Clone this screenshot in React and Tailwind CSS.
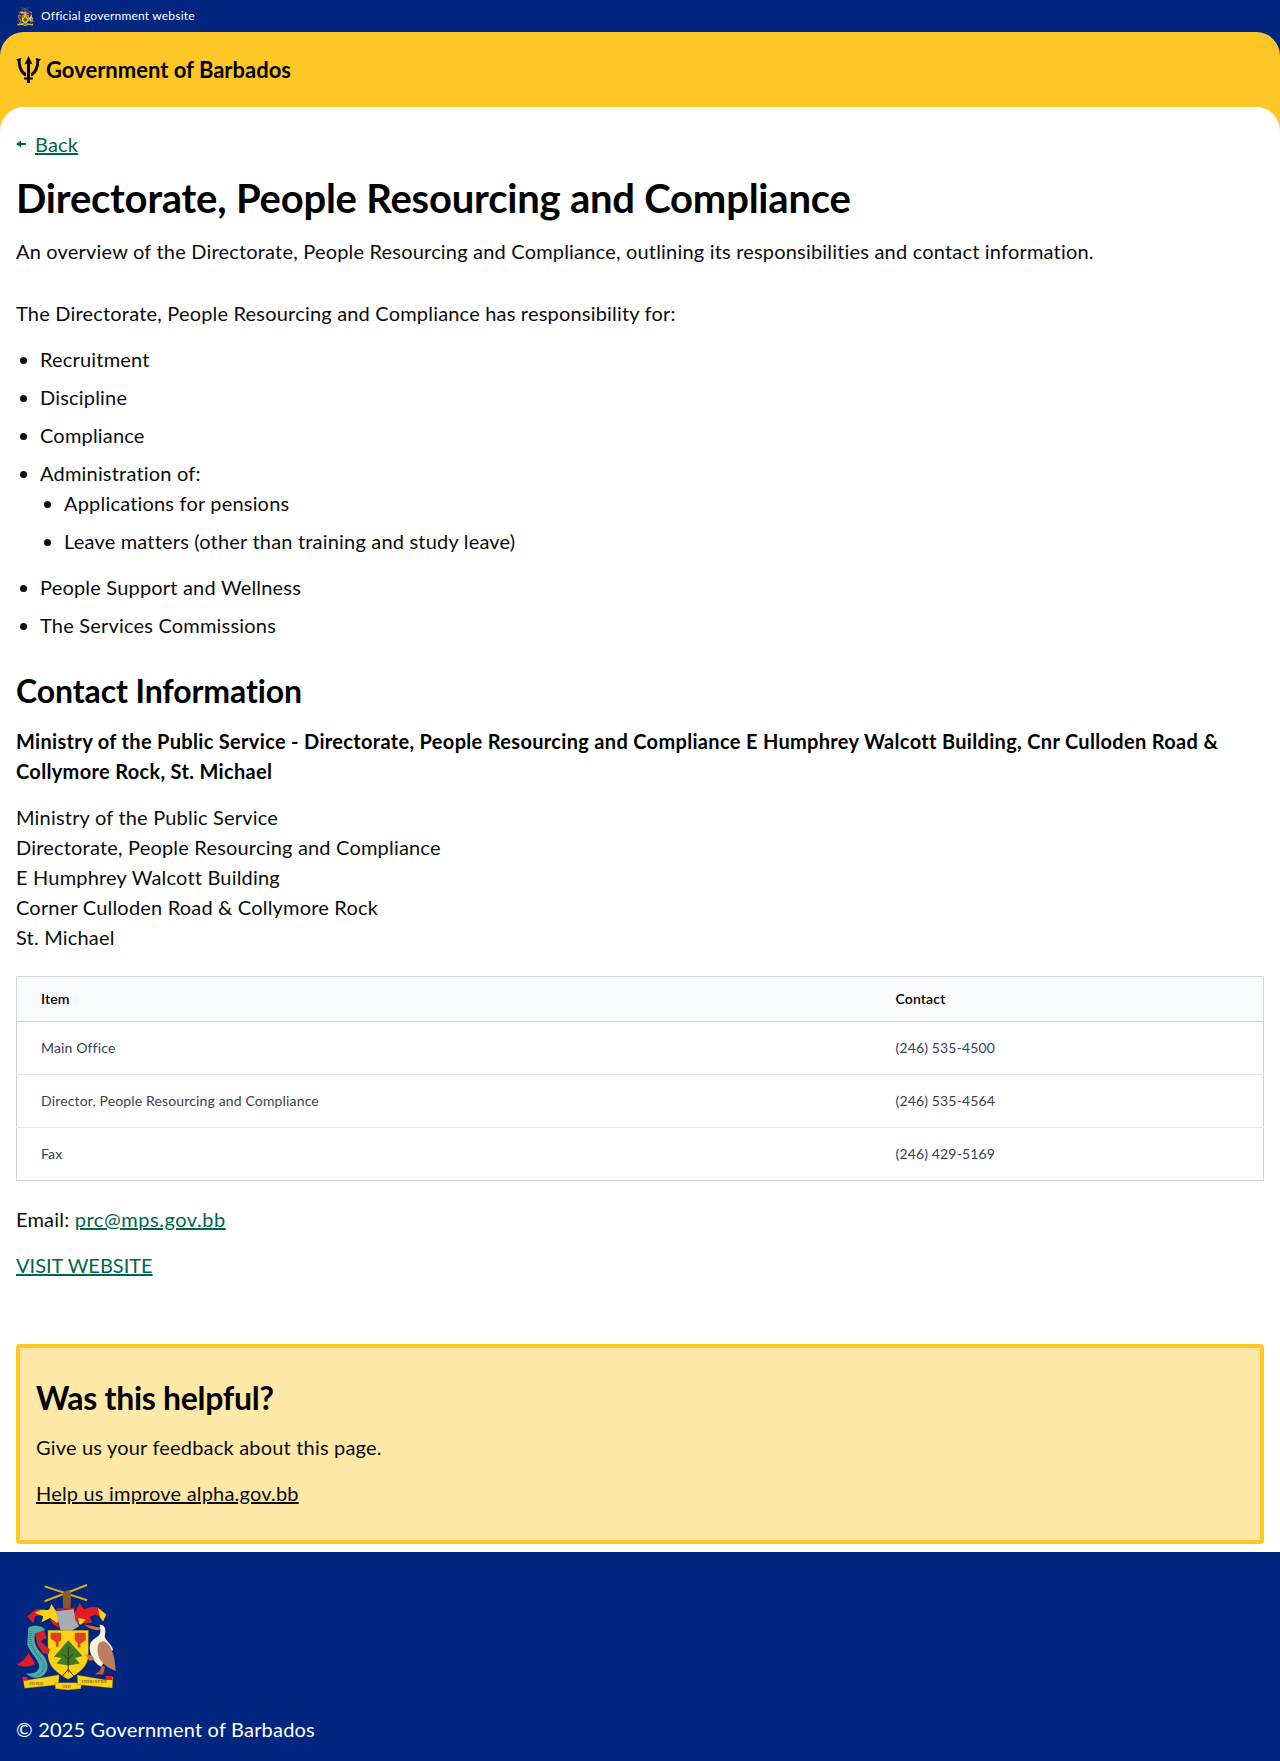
const font = { fontFamily: '"Lato", "Liberation Sans", sans-serif', fontVariantLigatures: "none" };

function Arms({ className }) {
  return (
    <svg viewBox="45 70 310 325" className={className}>
      {/* sugar canes and fist */}
      <path d="M134 80 262 122M134 125 262 76" stroke="#e0a81c" strokeWidth="6" />
      <path d="M190 145 188 100 204 90 214 100 212 145Z" fill="#8a5a2b" />
      {/* mantling */}
      <path d="M82 170 108 150 135 148 130 165 105 170 100 192Z" fill="#e31b23" />
      <path d="M150 180 172 170 178 205 160 195Z" fill="#e31b23" />
      <path d="M105 160C125 145 140 155 148 150L155 133 165 150 180 165 172 190 150 175 125 188 130 170Z" fill="#fcd116" />
      <path d="M212 172C225 165 228 150 240 130L252 150C270 140 295 140 305 150L300 170 285 165 270 172 278 188 255 192 240 185 232 195 215 185Z" fill="#e31b23" />
      <path d="M295 145 320 165 310 186 300 172Z" fill="#fcd116" />
      <path d="M235 175 258 180 245 195 238 195Z" fill="#fcd116" />
      {/* helmet */}
      <path d="M168 155 222 148 226 180 238 200 205 220 182 212 175 185Z" fill="#a9adb3" />
      <path d="M170 150 225 146" stroke="#e31b23" strokeWidth="5" />
      {/* shield */}
      <path d="M144 212H266V285C266 325 230 345 205 360 180 345 144 325 144 285Z" fill="#fcd116" stroke="#6b5a10" strokeWidth="1" />
      <path d="M152 220h32v22l-8 6v14h-8v-14l-16-10Z" fill="#d9431f" />
      <path d="M225 220h33v22l-16 10v12h-8v-12l-9-10Z" fill="#d9431f" />
      {/* bearded fig tree */}
      <path d="M205 242 178 275 162 292 185 296 170 312 205 318 240 312 226 296 248 290 232 272Z" fill="#3f7d24" />
      <path d="M205 262V340M205 330 188 350M205 330 222 350M205 300 190 285M205 300 222 282" stroke="#3d2a12" strokeWidth="3" fill="none" />
      {/* dolphin */}
      <path d="M85 205C100 195 125 198 135 210L128 222 105 222C100 250 108 265 128 285 150 310 150 345 115 355 100 357 88 350 78 342 100 345 120 335 118 318 115 300 90 280 82 255Z" fill="#4fa9a7" />
      <path d="M92 215C88 250 100 275 120 295 138 315 138 335 112 347" stroke="#1d6a7a" strokeWidth="5" strokeDasharray="2 4" fill="none" />
      <path d="M78 215C72 245 80 280 98 298L105 315C90 322 70 325 50 315 65 308 80 295 85 280 75 260 72 235 78 215Z" fill="#e31b23" />
      <path d="M105 222 132 212 140 235 122 245 150 270 145 285 128 280 112 255Z" fill="#d3202a" />
      {/* pelican */}
      <path d="M252 196C272 196 290 206 305 204 300 216 280 215 252 196Z" fill="#dc6b3c" />
      <path d="M300 196C314 194 320 210 316 224 310 240 335 250 340 270L304 322C280 310 268 280 270 258 274 235 304 235 302 214Z" fill="#f6f2de" />
      <path d="M300 248C325 235 345 275 348 335 325 325 305 315 296 290 292 270 292 255 300 248Z" fill="#b97f5f" />
      <path d="M258 285 278 290 285 302 268 304Z" fill="#dc6b3c" />
      <path d="M306 318 316 322 310 345 285 345 300 335Z" fill="#d8562c" />
      {/* motto scroll */}
      <path d="M68 354 84 362 178 346 176 376 74 387Z" fill="#fcd116" stroke="#7a5a10" strokeWidth="1" />
      <path d="M165 370 245 370 243 388 205 392 167 388Z" fill="#fcd116" stroke="#7a5a10" strokeWidth="1" />
      <path d="M232 347 320 362 340 352 338 386 234 376Z" fill="#fcd116" stroke="#7a5a10" strokeWidth="1" />
      <path d="M68 352h14v12h-14ZM318 350h20v12h-20Z" fill="#e31b23" />
      <text x="88" y="376" fontSize="15" fill="#5b4510" fontFamily="Liberation Serif, serif">PRIDE</text>
      <text x="184" y="386" fontSize="13" fill="#5b4510" fontFamily="Liberation Serif, serif">AND</text>
      <text x="246" y="372" fontSize="15" fill="#5b4510" fontFamily="Liberation Serif, serif">INDUSTRY</text>
    </svg>
  );
}

function Trident() {
  return (
    <svg viewBox="0 0 25 27" className="w-[25px] h-[27px] shrink-0">
      <path d="M12.5 0 16.5 8.5 14 7.5V21.5H17V23.5H14V27H11V23.5H8V21.5H11V7.5L8.5 8.5Z" fill="#000" />
      <path d="M0 3.2 5.5 2 4.6 4.5C4.6 10 6.5 15 10 17V20.5C4 18 1.8 11 1.8 5.2Z" fill="#000" />
      <path d="M25 3.2 19.5 2 20.4 4.5C20.4 10 18.5 15 15 17V20.5C21 18 23.2 11 23.2 5.2Z" fill="#000" />
    </svg>
  );
}

const rows = [
  ["Main Office", "(246) 535-4500"],
  ["Director, People Resourcing and Compliance", "(246) 535-4564"],
  ["Fax", "(246) 429-5169"],
];

export default function App() {
  return (
    <div style={font} className="bg-[#00267f] text-[20px] leading-[30px] tracking-[0.19px] text-[#0b0c0c]">
      <div className="h-8 px-4 flex items-center gap-[7px] text-xs text-white">
        <Arms className="w-[18px] h-[19px]" />
        <span>Official government website</span>
      </div>
      <div className="bg-[#ffc726] rounded-t-3xl">
        <div className="h-[75px] px-4 flex items-center gap-[5px]">
          <Trident />
          <span className="text-[22px] font-bold text-black tracking-normal">Government of Barbados</span>
        </div>
        <main className="bg-white rounded-t-3xl px-4 pt-[22px] pb-2">
          <div className="flex items-center gap-[9px] h-[30px]">
            <svg viewBox="0 0 10 8" className="w-[10px] h-2 shrink-0">
              <path d="M0 4 5 .5V3H10V5H5V7.5Z" fill="#00654a" />
            </svg>
            <a className="underline decoration-2 text-[#00654a]">Back</a>
          </div>
          <h1 className="mt-[9px] text-[40px] leading-[60px] font-bold text-black tracking-[-0.22px]">
            Directorate, People Resourcing and Compliance
          </h1>
          <p className="mt-2">
            An overview of the Directorate, People Resourcing and Compliance, outlining its responsibilities and contact information.
          </p>
          <p className="mt-8">The Directorate, People Resourcing and Compliance has responsibility for:</p>
          <ul className="mt-4 list-disc pl-6">
            <li className="mb-2">Recruitment</li>
            <li className="mb-2">Discipline</li>
            <li className="mb-2">Compliance</li>
            <li className="mb-2">
              Administration of:
              <ul className="list-disc pl-6 pb-2">
                <li className="mb-2">Applications for pensions</li>
                <li>Leave matters (other than training and study leave)</li>
              </ul>
            </li>
            <li className="mb-2">People Support and Wellness</li>
            <li>The Services Commissions</li>
          </ul>
          <h2 className="mt-[27px] text-[32px] leading-[48px] font-bold text-black tracking-[-0.1px]">Contact Information</h2>
          <p className="mt-[11px] font-bold text-black tracking-[0.32px]">
            Ministry of the Public Service - Directorate, People Resourcing and Compliance E Humphrey Walcott Building, Cnr Culloden Road & Collymore Rock, St. Michael
          </p>
          <p className="mt-4">
            Ministry of the Public Service<br />
            Directorate, People Resourcing and Compliance<br />
            E Humphrey Walcott Building<br />
            Corner Culloden Road & Collymore Rock<br />
            St. Michael
          </p>
          <table className="mt-[24px] w-full border border-[#d1d5db] border-collapse text-sm tracking-[0.15px]">
            <thead>
              <tr className="bg-[#f9fafb] border-b border-[#d1d5db]">
                <th className="h-[45px] w-[855px] pl-6 text-left font-semibold text-black">Item</th>
                <th className="pl-6 text-left font-semibold text-black">Contact</th>
              </tr>
            </thead>
            <tbody className="text-[#374151]">
              {rows.map((r) => (
                <tr key={r[0]} className="border-b border-[#e5e7eb] last:border-[#d1d5db]">
                  <td className="h-[53px] pl-6">{r[0]}</td>
                  <td className="pl-6">{r[1]}</td>
                </tr>
              ))}
            </tbody>
          </table>
          <p className="mt-[23px]">
            Email: <a className="underline decoration-2 text-[#00654a] tracking-[0.55px]">prc@mps.gov.bb</a>
          </p>
          <p className="mt-4">
            <a className="underline decoration-2 text-[#00654a] tracking-normal">VISIT WEBSITE</a>
          </p>
          <section className="mt-[64px] bg-[#ffe9a8] border-4 border-[#ffc726] rounded p-4">
            <h2 className="mt-[10px] text-[32px] leading-[48px] font-bold text-black tracking-[-0.3px]">Was this helpful?</h2>
            <p className="mt-[10px]">Give us your feedback about this page.</p>
            <p className="mt-4 mb-4"><a className="underline decoration-2">Help us improve alpha.gov.bb</a></p>
          </section>
        </main>
      </div>
      <footer className="bg-[#00267f] text-white px-4 pt-[31px] pb-[17px]">
        <Arms className="w-[103px] h-[108px] -ml-px" />
        <p className="mt-[23px]">© 2025 Government of Barbados</p>
      </footer>
    </div>
  );
}
